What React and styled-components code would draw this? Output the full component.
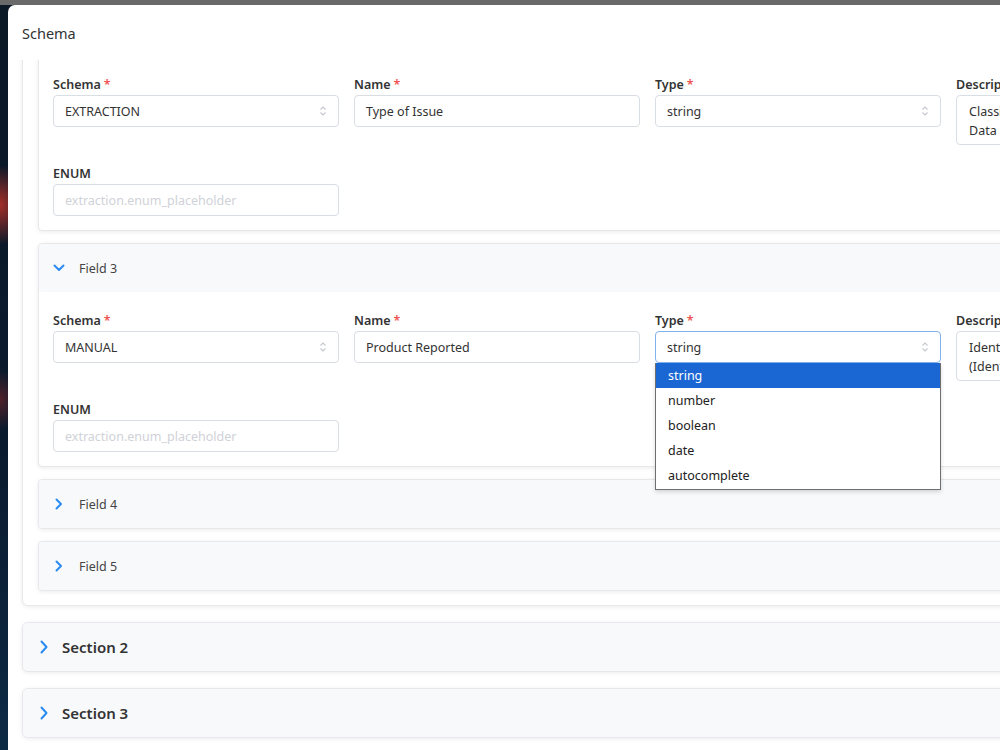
import React from 'react';
import styled, { createGlobalStyle } from 'styled-components';

const GlobalStyle = createGlobalStyle`
    html, body {
        margin: 0;
        padding: 0;
    }
    body {
        font-family: "Noto Sans", "Open Sans", sans-serif;
        color: #333;
    }
`;

const Backdrop = styled.div`
    height: 750px;
    overflow: hidden;
    padding: 5px 0 0 8px;
    box-sizing: border-box;
    background:
        linear-gradient(#6a6a6a, #6a6a6a) top / 100% 5px no-repeat,
        radial-gradient(ellipse 30px 40px at 0 205px, rgba(190, 50, 40, .85), transparent),
        radial-gradient(ellipse 20px 30px at 0 400px, rgba(150, 40, 40, .5), transparent),
        linear-gradient(#0b1826, #0a1a2e 60%, #0d2a45);
`;

const Modal = styled.div`
    width: 1100px;
    height: 760px;
    background: #fff;
    border-radius: 7px 0 0 0;
    display: flex;
    flex-direction: column;
`;

const ModalHeader = styled.div`
    height: 55px;
    flex: none;
    display: flex;
    align-items: center;
    padding: 0 14px;
    font-size: 14.5px;
    color: #333;
`;

const ModalBody = styled.div`
    flex: 1;
    overflow: hidden;
    padding: 0 14px;
`;

/* content is shown scrolled: the top of section 1 sits above the visible area */
const Scroller = styled.div`
    margin-top: -21px;
    display: flex;
    flex-direction: column;
    gap: 16px;
`;

const Card = styled.div`
    background: #fff;
    border: 1px solid #e6e8ec;
    border-radius: ${({ small }) => (small ? '4px' : '6px')};
    box-shadow: 0 1px 4px rgba(0, 0, 0, .08);
`;

const CardHeader = styled.div`
    height: 48px;
    display: flex;
    align-items: center;
    background: #f8f9fb;
    border-radius: inherit;
    padding-left: ${({ small }) => (small ? '14px' : '17px')};
    gap: 14px;
    font-size: ${({ small }) => (small ? '12.5px' : '15px')};
    font-weight: ${({ small }) => (small ? 400 : 600)};
    color: ${({ small }) => (small ? '#444' : '#333')};
`;

const ChevronBox = styled.span`
    width: ${({ big }) => (big ? '8px' : '12px')};
    display: flex;
    justify-content: center;
`;

const SectionBody = styled.div`
    padding: 15px 15px 14px;
    display: flex;
    flex-direction: column;
    gap: 12px;
`;

const FieldGrid = styled.div`
    display: grid;
    grid-template-columns: repeat(4, 286px);
    column-gap: 15px;
    row-gap: 19px;
    padding: 19px 14px 14px;
    align-items: start;
`;

const FieldBox = styled.div`
    position: relative;
    display: flex;
    flex-direction: column;
`;

const Label = styled.label`
    font-size: 12.5px;
    font-weight: 600;
    line-height: 20px;
    color: #333;
    white-space: nowrap;
`;

const Req = styled.span`
    color: #ef5350;
    margin-left: 3px;
`;

const InputBox = styled.div`
    height: 32px;
    box-sizing: border-box;
    border: 1px solid ${({ focused }) => (focused ? '#7fb2ee' : '#d9dde4')};
    border-radius: 4px;
    display: flex;
    align-items: center;
    justify-content: space-between;
    padding: 0 11px;
    font-size: 12.5px;
    color: ${({ placeholder }) => (placeholder ? '#cfd2d8' : '#333')};
    background: #fff;
    white-space: nowrap;
`;

const TextArea = styled.textarea`
    height: 50px;
    box-sizing: border-box;
    border: 1px solid #d9dde4;
    border-radius: 4px;
    padding: 6px 12px;
    font-family: inherit;
    font-size: 12.5px;
    line-height: 19px;
    color: #333;
    resize: none;
    overflow: hidden;
    white-space: pre;
`;

const Dropdown = styled.ul`
    position: absolute;
    top: 52px;
    left: 0;
    width: 286px;
    box-sizing: border-box;
    margin: 0;
    padding: 0 0 1px;
    list-style: none;
    background: #fff;
    border: 1px solid #6f6f6f;
    border-top: none;
    box-shadow: 0 2px 4px rgba(0, 0, 0, .15);
    z-index: 5;
`;

const Option = styled.li`
    height: 25px;
    display: flex;
    align-items: center;
    padding-left: 12px;
    font-size: 12.5px;
    color: ${({ active }) => (active ? '#fff' : '#222')};
    background: ${({ active }) => (active ? '#1a66d2' : '#fff')};
`;

const SortIcon = () => (
    <svg width="8" height="12" viewBox="0 0 8 12" fill="none" stroke="#c4c7cd" strokeWidth="1.1">
        <polyline points="1.5,4.5 4,2 6.5,4.5" />
        <polyline points="1.5,7.5 4,10 6.5,7.5" />
    </svg>
);

const Chevron = ({ open, big }) => (
    <ChevronBox big={big}>
        {open ? (
            <svg width="12" height="8" viewBox="0 0 12 8" fill="none" stroke="#2b8bf0" strokeWidth="2" strokeLinecap="round" strokeLinejoin="round">
                <polyline points="1.5,1.5 6,6 10.5,1.5" />
            </svg>
        ) : big ? (
            <svg width="8" height="14" viewBox="0 0 8 14" fill="none" stroke="#2b8bf0" strokeWidth="2" strokeLinecap="round" strokeLinejoin="round">
                <polyline points="1.5,1.5 6.5,7 1.5,12.5" />
            </svg>
        ) : (
            <svg width="8" height="12" viewBox="0 0 8 12" fill="none" stroke="#2b8bf0" strokeWidth="2" strokeLinecap="round" strokeLinejoin="round">
                <polyline points="1.5,1.5 6,6 1.5,10.5" />
            </svg>
        )}
    </ChevronBox>
);

const types = ['string', 'number', 'boolean', 'date', 'autocomplete'];

const FieldForm = ({ schema, name, description, open }) => (
    <FieldGrid>
        <FieldBox>
            <Label>Schema<Req>*</Req></Label>
            <InputBox>{schema}<SortIcon /></InputBox>
        </FieldBox>
        <FieldBox>
            <Label>Name<Req>*</Req></Label>
            <InputBox>{name}</InputBox>
        </FieldBox>
        <FieldBox>
            <Label>Type<Req>*</Req></Label>
            <InputBox focused={open}>string<SortIcon /></InputBox>
            {open && (
                <Dropdown>
                    {types.map(t => <Option key={t} active={t === 'string'}>{t}</Option>)}
                </Dropdown>
            )}
        </FieldBox>
        <FieldBox>
            <Label>Description</Label>
            <TextArea readOnly rows={2} defaultValue={description} />
        </FieldBox>
        <FieldBox>
            <Label>ENUM</Label>
            <InputBox placeholder="true">extraction.enum_placeholder</InputBox>
        </FieldBox>
    </FieldGrid>
);

const Field = ({ title, children }) => (
    <Card small>
        {title && (
            <CardHeader small>
                <Chevron open={!!children} />
                <span>{title}</span>
            </CardHeader>
        )}
        {children}
    </Card>
);

const Section = ({ title, children }) => (
    <Card>
        {title && (
            <CardHeader>
                <Chevron open={!!children} big />
                <span>{title}</span>
            </CardHeader>
        )}
        {children && <SectionBody>{children}</SectionBody>}
    </Card>
);

export default function App() {
    return (
        <>
            <GlobalStyle />
            <Backdrop>
                <Modal>
                    <ModalHeader>Schema</ModalHeader>
                    <ModalBody>
                        <Scroller>
                            <Section>
                                <Field>
                                    <FieldForm
                                        schema="EXTRACTION"
                                        name="Type of Issue"
                                        description={'Classification of the reported issue\nData Inconsistency, Defect, Other'}
                                    />
                                </Field>
                                <Field title="Field 3">
                                    <FieldForm
                                        schema="MANUAL"
                                        name="Product Reported"
                                        description={'Identify the product mentioned\n(Identifier or product name)'}
                                        open
                                    />
                                </Field>
                                <Field title="Field 4" />
                                <Field title="Field 5" />
                            </Section>
                            <Section title="Section 2" />
                            <Section title="Section 3" />
                        </Scroller>
                    </ModalBody>
                </Modal>
            </Backdrop>
        </>
    );
}
